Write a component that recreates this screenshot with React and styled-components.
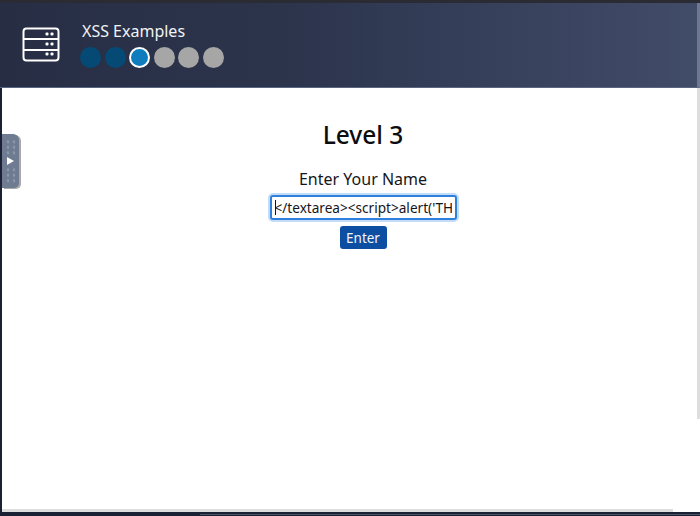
import React from 'react';
import styled, { createGlobalStyle } from 'styled-components';

const GlobalStyle = createGlobalStyle`
	html, body {
		margin: 0;
		padding: 0;
		overflow: hidden;
		background: #fff;
		font-family: 'Noto Sans', 'Open Sans', sans-serif;
	}
`;

const steps = ['done', 'done', 'current', 'todo', 'todo', 'todo'];

const ServerIcon = () => (
	<svg width='38' height='36' viewBox='0 0 38 36' fill='none' stroke='#fff' strokeWidth='2'>
		<rect x='1.5' y='1.5' width='35' height='32' rx='3' />
		<path d='M1.5 12h35M1.5 23h35' />
		<g fill='#fff' stroke='none'>
			<rect x='23.5' y='5.5' width='3' height='3' rx='1' />
			<rect x='28.5' y='5.5' width='3' height='3' rx='1' />
			<rect x='23.5' y='15.5' width='3' height='3' rx='1' />
			<rect x='28.5' y='15.5' width='3' height='3' rx='1' />
			<rect x='23.5' y='25.5' width='3' height='3' rx='1' />
			<rect x='28.5' y='25.5' width='3' height='3' rx='1' />
		</g>
	</svg>
);

const App = () => {
	return (
		<Page>
			<GlobalStyle />
			<TopEdge />
			<Header>
				<ServerIcon />
				<HeaderText>
					<Title>XSS Examples</Title>
					<Steps>
						{steps.map((state, i) => (
							<Step key={i} $state={state} />
						))}
					</Steps>
				</HeaderText>
			</Header>
			<Main>
				<Handle>
					<Dots />
					<Arrow />
					<Dots />
				</Handle>
				<Heading>Level 3</Heading>
				<Label htmlFor='name'>Enter Your Name</Label>
				<InputWrap>
					<NameInput id='name' readOnly value="</textarea><script>alert('TH" />
					<Caret />
				</InputWrap>
				<EnterButton>Enter</EnterButton>
				<ScrollRight />
				<ScrollBottom />
			</Main>
			<BottomEdge>
				<BottomLine />
			</BottomEdge>
		</Page>
	);
};

const Page = styled.div`
	display: flex;
	flex-direction: column;
	width: 700px;
	height: 516px;
	overflow: hidden;
	background: #1b2134;
`;

const TopEdge = styled.div`
	flex: none;
	height: 3px;
	background: #2b2b33;
`;

const Header = styled.header`
	flex: none;
	display: flex;
	align-items: center;
	gap: 20px;
	box-sizing: border-box;
	height: 85px;
	padding: 0 0 0 22px;
	background: linear-gradient(90deg, #272e44 0%, #2c344c 40%, #414c69 100%);
	border-bottom: 1px solid #5a6680;
	border-right: 3px solid #6f7890;
`;

const HeaderText = styled.div`
	display: flex;
	flex-direction: column;
	gap: 5px;
	margin-top: -1px;
`;

const Title = styled.div`
	margin-left: 2px;
	font-size: 16px;
	line-height: 21px;
	color: #f1f3f6;
`;

const Steps = styled.div`
	display: flex;
	gap: 3.6px;
`;

const stepColors = {
	done: '#054a75',
	current: '#0f7dbd',
	todo: '#a6a6a6',
};

const Step = styled.span`
	box-sizing: border-box;
	width: 21px;
	height: 21px;
	border-radius: 50%;
	background: ${(p) => stepColors[p.$state]};
	border: ${(p) => (p.$state === 'current' ? '2px solid #fff' : 'none')};
`;

const Main = styled.main`
	position: relative;
	flex: 1;
	display: flex;
	flex-direction: column;
	align-items: center;
	margin-left: 2px;
	padding: 29px 0 0 24px;
	background: #fff;
`;

const Handle = styled.div`
	position: absolute;
	top: 46px;
	left: 0;
	display: flex;
	flex-direction: column;
	align-items: center;
	justify-content: space-between;
	box-sizing: border-box;
	width: 17px;
	height: 54px;
	padding: 5px 0;
	background: #6e7b90;
	border-radius: 0 6px 5px 0;
	box-shadow: 2px 1px 0 #a9a9a9;
`;

const Dots = styled.div`
	width: 12px;
	height: 16.5px;
	background-image: radial-gradient(circle, #8d98aa 1.3px, transparent 1.6px);
	background-size: 6px 5.5px;
`;

const Arrow = styled.div`
	width: 0;
	height: 0;
	border-left: 7px solid #fff;
	border-top: 4px solid transparent;
	border-bottom: 4px solid transparent;
`;

const Heading = styled.h1`
	margin: 0;
	font-size: 24.5px;
	line-height: 36px;
	font-weight: 500;
	color: #0c0c10;
`;

const Label = styled.label`
	margin-top: 14px;
	font-size: 16px;
	line-height: 24px;
	color: #16161a;
`;

const InputWrap = styled.div`
	position: relative;
	margin-top: 4px;
`;

const NameInput = styled.input`
	display: block;
	box-sizing: border-box;
	width: 187px;
	height: 25px;
	padding: 0 3px;
	font-family: inherit;
	font-size: 13.6px;
	color: #16161a;
	background: #fff;
	border: 2px solid #2f7fdc;
	border-radius: 3px;
	outline: none;
	box-shadow: 0 0 0 2px #c4dcf8;
`;

const Caret = styled.span`
	position: absolute;
	top: 5px;
	left: 5px;
	width: 1px;
	height: 15px;
	background: #16161a;
`;

const EnterButton = styled.button`
	width: 47px;
	height: 23px;
	margin-top: 6px;
	padding: 0;
	font-family: inherit;
	font-size: 13.5px;
	color: #f2f5fa;
	background: #0b4ea2;
	border: none;
	border-radius: 3px;
`;

const ScrollRight = styled.div`
	position: absolute;
	top: 0;
	right: 0;
	width: 3px;
	height: 331px;
	background: #dedede;
`;

const ScrollBottom = styled.div`
	position: absolute;
	left: 0;
	bottom: 0;
	width: 671px;
	height: 3px;
	background: #dedede;
`;

const BottomEdge = styled.div`
	flex: none;
	display: flex;
	align-items: flex-end;
	justify-content: flex-end;
	height: 4px;
	padding-bottom: 1px;
	box-sizing: border-box;
	background: #1b2134;
`;

const BottomLine = styled.div`
	width: 500px;
	height: 1px;
	background: #4a5266;
`;

export default App;
